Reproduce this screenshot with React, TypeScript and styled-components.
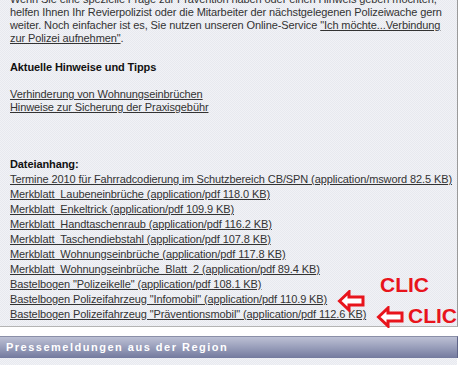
import React from 'react';
import styled, { createGlobalStyle } from 'styled-components';

const GlobalStyle = createGlobalStyle`
  html, body {
    margin : 0;
    padding : 0;
    background : #ffffff;
    overflow : hidden;
  }
  body {
    font-family : "Liberation Sans", Arial, sans-serif;
  }
`;

const files = [
  'Termine 2010 für Fahrradcodierung im Schutzbereich CB/SPN (application/msword 82.5 KB)',
  'Merkblatt_Laubeneinbrüche (application/pdf 118.0 KB)',
  'Merkblatt_Enkeltrick (application/pdf 109.9 KB)',
  'Merkblatt_Handtaschenraub (application/pdf 116.2 KB)',
  'Merkblatt_Taschendiebstahl (application/pdf 107.8 KB)',
  'Merkblatt_Wohnungseinbrüche (application/pdf 117.8 KB)',
  'Merkblatt_Wohnungseinbrüche_Blatt_2 (application/pdf 89.4 KB)',
  'Bastelbogen "Polizeikelle" (application/pdf 108.1 KB)',
  'Bastelbogen Polizeifahrzeug "Infomobil" (application/pdf 110.9 KB)',
  'Bastelbogen Polizeifahrzeug "Präventionsmobil" (application/pdf 112.6 KB)',
];

const Arrow = () => (
  <svg width="28" height="22" viewBox="0 0 28 22">
    <path d="M2.5 11 L12 2 L12 7 L26 7 L26 15 L12 15 L12 20 Z" fill="#ffffff" stroke="#e8141c" strokeWidth="3" strokeLinejoin="miter" />
  </svg>
);

const App = () => {
  return (
    <>
      <GlobalStyle />
      <Page>
        <Panel>
          <Intro>
            Wenn Sie eine spezielle Frage zur Prävention haben oder einen Hinweis geben möchten,
            helfen Ihnen Ihr Revierpolizist oder die Mitarbeiter der nächstgelegenen Polizeiwache gern
            weiter. Noch einfacher ist es, Sie nutzen unseren Online-Service{' '}
            <TextLink href="#">"Ich möchte...Verbindung zur Polizei aufnehmen"</TextLink>.
          </Intro>
          <Heading>Aktuelle Hinweise und Tipps</Heading>
          <Links>
            <TextLink href="#">Verhinderung von Wohnungseinbrüchen</TextLink>
            <TextLink href="#">Hinweise zur Sicherung der Praxisgebühr</TextLink>
          </Links>
          <Files>
            <FileHeading>Dateianhang:</FileHeading>
            {files.map((f) => (
              <FileLink key={f} href="#">{f}</FileLink>
            ))}
          </Files>
          <Clic top={276} left={380}>CLIC</Clic>
          <ArrowBox top={290} left={337}><Arrow /></ArrowBox>
          <ArrowBox top={306} left={376}><Arrow /></ArrowBox>
          <Clic top={307} left={408}>CLIC</Clic>
        </Panel>
        <Gap />
        <SectionBar>Pressemeldungen aus der Region</SectionBar>
        <Below />
      </Page>
    </>
  );
};

const Page = styled.div`
  width : 465px;
  height : 365px;
  overflow : hidden;
  background : #ffffff;
`;

const Panel = styled.div`
  position : relative;
  width : 447px;
  height : 333px;
  margin-top : -7px;
  padding : 0 0 0 10px;
  border-right : 1px solid #9a9a9a;
  border-bottom : 1px solid #b4b4b4;
  background-color : #eceef3;
  background-image : repeating-conic-gradient(#e7e9ef 0 25%, #f1f2f6 0 50%);
  background-size : 2px 2px;
  color : #333333;
  font-size : 11px;
  letter-spacing : -0.1px;
`;

const Intro = styled.p`
  margin : 0;
  padding : 0;
  width : 442px;
  line-height : 13px;
`;

const TextLink = styled.a`
  color : #333333;
  text-decoration : underline;
`;

const Heading = styled.h3`
  margin : 16px 0 14px;
  font-size : 11px;
  line-height : 13px;
  font-weight : bold;
  color : #111111;
`;

const Links = styled.div`
  display : flex;
  flex-direction : column;
  align-items : flex-start;
  line-height : 13px;
`;

const Files = styled.div`
  display : flex;
  flex-direction : column;
  align-items : flex-start;
  margin-top : 43px;
  line-height : 15px;
`;

const FileHeading = styled.div`
  font-weight : bold;
  color : #111111;
`;

const FileLink = styled.a`
  color : #333333;
  text-decoration : underline;
  white-space : nowrap;
`;

const Clic = styled.div<{ top : number; left : number }>`
  position : absolute;
  top : ${(p) => p.top + 6}px;
  left : ${(p) => p.left}px;
  color : #e8141c;
  font-size : 21px;
  font-weight : bold;
  line-height : 20px;
  letter-spacing : 0;
`;

const ArrowBox = styled.div<{ top : number; left : number }>`
  position : absolute;
  top : ${(p) => p.top + 7}px;
  left : ${(p) => p.left}px;
  width : 28px;
  height : 22px;
`;

const Gap = styled.div`
  height : 9px;
`;

const SectionBar = styled.div`
  width : 451px;
  height : 21px;
  padding-left : 6px;
  border-top : 1px solid #8a8fa8;
  border-right : 1px solid #5f6588;
  background : linear-gradient(#bcc0d4, #9ca1bd 45%, #737a9e);
  color : #ffffff;
  font-size : 11px;
  font-weight : bold;
  letter-spacing : 1.5px;
  line-height : 21px;
  white-space : nowrap;
`;

const Below = styled.div`
  height : 20px;
  width : 457px;
  background-color : #eceef3;
  background-image : repeating-conic-gradient(#e7e9ef 0 25%, #f1f2f6 0 50%);
  background-size : 2px 2px;
`;

export default App;
